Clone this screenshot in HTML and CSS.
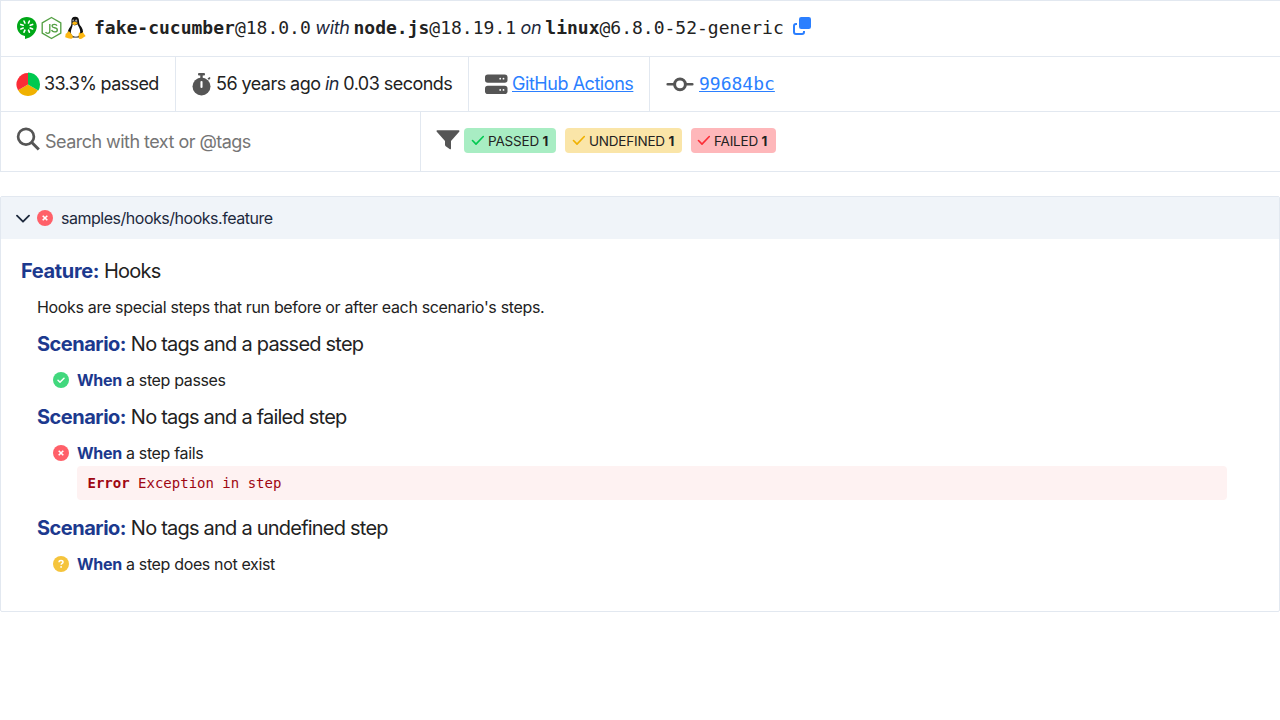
FILE: index.html
```
<!DOCTYPE html>
<html lang="en">
<head>
<meta charset="utf-8">
<title>Cucumber Report</title>
<link rel="stylesheet" href="styles.css">
</head>
<body>
<header class="summary">
  <div class="row setup">
    <svg class="logo-cucumber" width="21" height="24" viewBox="0 0 21 24"><path fill="#00a818" d="M10.800 1C5.300 1 1 5 1 10.600c0 4.900 3.500 8.800 8 9.500v2.800c6.300-.8 11.500-6 11.800-12.300C20.800 5 16.200 1 10.800 1z"/><g fill="none" stroke="#fff" stroke-width="1.600" stroke-linecap="round"><path d="M8 5l.9 2M13.400 5l-.9 2M4.800 8.400l2.400.8M16.600 8.400l-2.400.8M4.800 12.900l2.400-.9M16.600 12.900l-2.400-.9M8 16.200l.9-2M13.400 16.200l-.9-2"/></g></svg>
    <svg class="logo-node" width="21" height="24" viewBox="0 0 21 24" fill="none" stroke="#54a044" stroke-width="1.350" stroke-linejoin="round"><path d="M10.500 1.500L1.200 6.800v10.400l9.300 5.300 9.300-5.300V6.800z"/><path d="M8.800 8v7.200c0 1.500-.8 2.100-2 2.100s-1.900-.5-2.200-1.300M16 9.700c-.4-1-1.200-1.400-2.600-1.400-1.500 0-2.300.6-2.300 1.600 0 2.800 5.200.8 5.200 4 0 1.200-1 1.900-2.700 1.900-1.800 0-2.700-.7-2.900-1.900"/></svg>
    <svg class="logo-linux" width="21" height="24" viewBox="0 0 21 24"><path fill="#111" d="M10.200.8c-2.900 0-4 2-3.800 4.600.2 3-.2 4-1.700 6.200-1.600 2.400-2.200 4.700-2.100 7L7 21.500h7l4-3.800c.3-3-.5-5.500-2.300-7.700-1.400-1.700-1.600-3-1.700-5.100C13.900 2.300 12.800.8 10.200.8z"/><path fill="#fff" d="M7.700 8.200l2 1.200 2.900-1.200c.4 1.800 2.800 4 2.600 7.800-.1 3-1.500 4.700-4.400 4.700-2.600 0-4.600-1.300-5-3.700-.3-3 1.700-5.200 1.900-8.800z"/><path fill="#ddd" d="M7.500 4.300c.1-1 1.400-1 1.600.1v1.200H7.700zM10.300 4.400c.2-1.200 1.800-1.200 1.900.2v1.100h-1.700z"/><circle cx="8.500" cy="4.900" r=".5"/><circle cx="11.200" cy="4.900" r=".5"/><path fill="#fdb813" d="M7.100 6.900c1-.9 2.200-1.900 3-1.200l2.700 1c-.1 1.200-2.200 2.200-3.400 2.200-1 0-2.100-1-2.300-2zM3.700 15.300c1.300 0 2.100 2.400 3.400 3.800 1.700 1.800.5 3.900-1.500 3.700-1.700-.2-3.500-.9-4.800-1.200-1.200-.5-.2-1.900-.2-3.200 0-1 .7-.8 1.600-1.300.6-.4.700-1.800 1.500-1.800zM14.500 16.200c-.1 1.300 2.200 1.500 3 .1 1 .1 1.100 1.600 2.300 2.700 1 .9.800 1.300-.3 1.800-1.800.8-2.300 2.200-4 2.200-1.600 0-2.200-1.200-1.900-2.900.3-1.600-.1-4 .9-3.900z"/></svg>
    <span class="mono tool"><b>fake-cucumber</b>@18.0.0</span><i class="with">with</i><span class="mono"><b>node.js</b>@18.19.1</span><i class="on">on</i><span class="mono"><b>linux</b>@6.8.0-52-generic</span>
    <svg class="copy" width="18" height="18" viewBox="0 0 18 18"><rect x="6" y="0" width="12" height="12" rx="2.200" fill="#2b7fff"/><path d="M4 7H3a2 2 0 0 0-2 2v6a2 2 0 0 0 2 2h6a2 2 0 0 0 2-2v-1" fill="none" stroke="#2b7fff" stroke-width="2"/></svg>
  </div>
  <div class="row stats">
    <div class="cell c1">
      <svg width="24" height="24" viewBox="0 0 24 24"><path fill="#f0b100" d="M12 12.500L21.960 18.250A11.500 11.500 0 0 1 2.040 18.250z"/><path fill="#00c950" d="M12 12.500V.5A12 12 0 0 1 22.390 18.500z"/><path fill="#fb2c36" d="M12 12.500V1A11.500 11.500 0 0 0 2.040 18.250z"/></svg>
      <span class="t1">33.3% passed</span>
    </div>
    <div class="cell c2">
      <svg width="20" height="24" viewBox="0 0 20 24"><g fill="#555"><rect x="6" y="1" width="7" height="2.400" rx="1"/><path d="M8.300 2h2.400v4H8.300zM15.500 6.500l2-1.500 1.100 1.100-1.600 2z"/><circle cx="9.500" cy="14.500" r="9"/></g><path d="M9.500 10v5" stroke="#fff" stroke-width="2.100" stroke-linecap="round"/></svg>
      <span class="t2">56 years ago <i>in</i> 0.03 seconds</span>
    </div>
    <div class="cell c3">
      <svg width="24" height="24" viewBox="0 0 24 24"><g fill="#555"><rect x="1" y="2.500" width="22.500" height="8.300" rx="2.800"/><rect x="1" y="13.700" width="22.500" height="8.300" rx="2.800"/></g><g fill="#fff"><circle cx="16.200" cy="6.700" r=".9"/><circle cx="19.500" cy="6.700" r=".9"/><circle cx="16.200" cy="17.900" r=".9"/><circle cx="19.500" cy="17.900" r=".9"/></g></svg>
      <a class="t3">GitHub Actions</a>
    </div>
    <div class="cell c4">
      <svg width="28" height="24" viewBox="0 0 28 24" fill="none" stroke="#555"><circle cx="14" cy="12.300" r="5.400" stroke-width="3"/><path d="M1.700 12.300h7M19.300 12.300h7" stroke-width="2.600" stroke-linecap="round"/></svg>
      <a class="mono">99684bc</a>
    </div>
  </div>
  <div class="row filters">
    <div class="cell search">
      <svg width="24" height="24" viewBox="0 0 24 24" fill="none" stroke="#555"><circle cx="10" cy="9.700" r="7.900" stroke-width="2.700"/><path d="M15.800 15.500l7 7" stroke-width="3"/></svg>
      <span class="t4">Search with text or @tags</span>
    </div>
    <div class="cell chips">
      <svg class="funnel" width="24" height="22" viewBox="0 0 24 22"><path fill="#555" d="M1.300 1.200h21.400c.9 0 1 .8.500 1.500L15 12v7.400c0 .9-.7 1.200-1.400.7L9.700 17.200c-.5-.4-.7-.8-.7-1.400V12L.8 2.700C.3 2 .4 1.200 1.300 1.200z"/></svg>
      <span class="chip passed"><svg width="13" height="11" viewBox="0 0 13 11"><path d="M1.500 5.500L5 9.100l7.300-7.600"/></svg><span>PASSED <b>1</b></span></span>
      <span class="chip undefined"><svg width="13" height="11" viewBox="0 0 13 11"><path d="M1.500 5.500L5 9.100l7.300-7.600"/></svg><span>UNDEFINED <b>1</b></span></span>
      <span class="chip failed"><svg width="13" height="11" viewBox="0 0 13 11"><path d="M1.500 5.500L5 9.100l7.300-7.600"/></svg><span>FAILED <b>1</b></span></span>
    </div>
  </div>
</header>
<main class="doc">
  <div class="doc-head">
    <svg class="chevron" width="14" height="9" viewBox="0 0 14 9"><path d="M1 1.700l6 6 6-6" fill="none" stroke="#1d293d" stroke-width="1.800" stroke-linecap="round" stroke-linejoin="round"/></svg>
    <svg class="status" width="16" height="16" viewBox="0 0 16 16"><circle cx="8" cy="8" r="8" fill="#ff6069"/><path d="M5.700 5.700l4.600 4.600M10.300 5.700l-4.600 4.600" stroke="#fff" stroke-width="1.600"/></svg>
    <span class="path">samples/hooks/hooks.feature</span>
  </div>
  <div class="doc-body">
    <h1><b>Feature:</b> <span>Hooks</span></h1>
    <div class="children">
      <p class="desc">Hooks are special steps that run before or after each scenario's steps.</p>
      <h2><b>Scenario:</b> <span>No tags and a passed step</span></h2>
      <div class="step"><svg class="status" width="16" height="16" viewBox="0 0 16 16"><circle cx="8" cy="8" r="8" fill="#41d87d"/><path d="M5 8.200l2 2 4-4" fill="none" stroke="#fff" stroke-width="1.500" stroke-linecap="round" stroke-linejoin="round"/></svg><span><b>When</b> a step passes</span></div>
      <h2><b>Scenario:</b> <span>No tags and a failed step</span></h2>
      <div class="step"><svg class="status" width="16" height="16" viewBox="0 0 16 16"><circle cx="8" cy="8" r="8" fill="#ff6069"/><path d="M5.700 5.700l4.600 4.600M10.300 5.700l-4.600 4.600" stroke="#fff" stroke-width="1.600"/></svg><span><b>When</b> a step fails</span></div>
      <pre class="error"><b>Error</b> Exception in step</pre>
      <h2><b>Scenario:</b> <span>No tags and a undefined step</span></h2>
      <div class="step"><svg class="status" width="16" height="16" viewBox="0 0 16 16"><circle cx="8" cy="8" r="8" fill="#f5c43c"/><path d="M6 6.300c0-1 .8-1.700 2-1.700s2 .7 2 1.600c0 1.300-1.800 1.200-1.900 2.600" fill="none" stroke="#fff" stroke-width="1.500"/><circle cx="8.100" cy="10.900" r=".9" fill="#fff"/></svg><span><b>When</b> a step does not exist</span></div>
    </div>
  </div>
</main>
</body>
</html>
```
FILE: styles.css
```
* { box-sizing: border-box; }
body {
  margin: 0;
  background: #fff;
  color: #222;
  font: 16px/24px Inter, "Liberation Sans", sans-serif;
  letter-spacing: -0.35px;
  overflow: hidden;
}
svg { display: block; flex: none; }
i { color: #1d293d; }
.mono { font-family: "DejaVu Sans Mono", monospace; letter-spacing: 0; }
.summary { border: 1px solid #e2e8f0; border-right: 0; font-size: 18px; white-space: nowrap; }
.row { display: flex; border-bottom: 1px solid #e2e8f0; }
.row:last-child { border-bottom: 0; }
.setup { height: 56px; padding: 0 0 2px 15px; align-items: center; }
.logo-node, .logo-linux { margin-left: 3.500px; }
.tool { margin-left: 8px; }
.with { margin: 0 4px 0 4.500px; }
.on { margin: 0 4px 0 4.500px; }
.copy { margin: -3px 0 0 9px; }
.stats { height: 55px; }
.cell { display: flex; align-items: center; border-right: 1px solid #e2e8f0; padding-left: 16px; }
.c1 { width: 175px; padding-left: 15px; }
.c1 span { margin-left: 4px; }
.c2 { width: 293px; }
.c2 span { margin-left: 4px; }
.c3 { width: 181px; padding-left: 15px; }
.c3 a { margin-left: 4px; }
.c4 { border-right: 0; }
.c4 a { margin-left: 5px; }
.t1 { letter-spacing: -0.63px; }
.t2 { letter-spacing: -0.55px; }
.t3 { letter-spacing: -0.45px; }
.t4 { letter-spacing: -0.53px; }
a { color: #2b7fff; text-decoration: underline; }
.filters { height: 59px; }
.search { width: 420px; color: #757575; padding: 0 0 2px 15px; }
.search svg { margin-top: -4px; }
.search span { margin: 2px 0 0 5px; }
.chips { border-right: 0; padding: 0 0 2px 15px; }
.funnel { margin: -2px 4px 0 0; }
.chip { display: flex; align-items: center; height: 25px; margin-right: 9px; padding-left: 7px; border-radius: 4px; font-size: 13.500px; letter-spacing: -0.2px; }
.chip svg { margin-right: 4px; fill: none; stroke-width: 1.600; stroke-linecap: round; stroke-linejoin: round; }
.passed { width: 92px; background: #a8edc3; stroke: #00c950; }
.undefined { width: 117px; background: #fae5a8; stroke: #f0b100; }
.failed { width: 85px; padding-left: 6px; background: #feb7ba; stroke: #fb2c36; }
.doc { margin-top: 24px; height: 416px; border: 1px solid #e2e8f0; border-radius: 2px; }
.doc-head { display: flex; align-items: center; height: 42px; padding-left: 15px; background: #f0f4f9; color: #1d293d; }
.doc-head .status { margin: 0 8px 0 7px; }
.path { letter-spacing: -0.48px; }
.doc-body { padding: 20px 52px 0 20px; }
.doc-body b { color: #1c398e; }
h1, h2 { margin: 0; font-size: 20px; line-height: 24px; font-weight: 400; letter-spacing: -0.78px; }
h1 b { letter-spacing: -0.35px; }
h2 b { letter-spacing: -0.5px; }
.children { padding-left: 16px; }
.desc { margin: 12px 0 13px; letter-spacing: -0.33px; }
.step { display: flex; align-items: center; gap: 8px; height: 24px; margin: 12px 0 13px 16px; letter-spacing: -0.35px; }
.step b { letter-spacing: -0.3px; }
.doc-body .error { margin: -12px 0 16px 40px; height: 34px; padding: 5px 10px 5px 10.500px; border-radius: 4px; background: #fef2f2; color: #9f0712; font: 14px/24px "DejaVu Sans Mono", monospace; letter-spacing: 0; }
.doc-body .error b { color: #9f0712; }
```
